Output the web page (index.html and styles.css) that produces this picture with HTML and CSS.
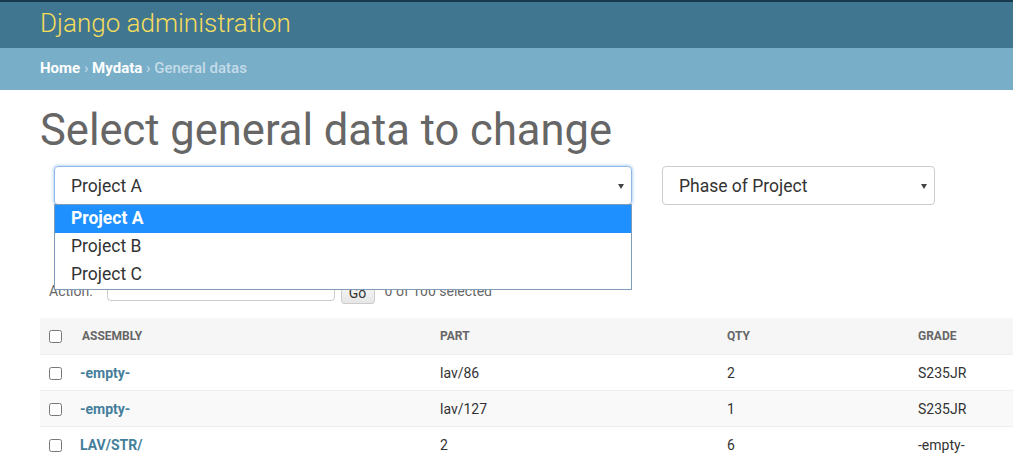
FILE: index.html
```html
<!DOCTYPE html>
<html lang="en">
<head>
  <meta charset="UTF-8" />
  <title>Select general data to change | Django site admin</title>
  <link rel="stylesheet" href="styles.css">
</head>
<body>
  <!-- Header -->
  <div class="header">
    <div class="branding">Django administration</div>
  </div>

  <!-- Breadcrumbs -->
  <div class="breadcrumbs">
    <a href="#">Home</a> &rsaquo; <a href="#">Mydata</a> &rsaquo; <span class="current">General datas</span>
  </div>

  <div class="content">
    <h1>Select general data to change</h1>

    <!-- Filter selects -->
    <div class="filters">
      <div class="fake-select focused project">
        <span>Project A</span>
        <span class="caret"></span>
        <ul class="options">
          <li class="selected">Project A</li>
          <li>Project B</li>
          <li>Project C</li>
        </ul>
      </div>
      <div class="fake-select phase">
        <span>Phase of Project</span>
        <span class="caret"></span>
      </div>
    </div>

    <!-- Actions -->
    <div class="actions">
      <label>Action:</label>
      <div class="action-select"></div>
      <button class="go">Go</button>
      <span class="counter">0 of 100 selected</span>
    </div>

    <!-- Result list -->
    <table class="results">
      <colgroup>
        <col class="c-check"><col class="c-assembly"><col class="c-part"><col class="c-qty"><col class="c-grade">
      </colgroup>
      <thead>
        <tr>
          <th><input type="checkbox"></th>
          <th>Assembly</th>
          <th>Part</th>
          <th>Qty</th>
          <th>Grade</th>
        </tr>
      </thead>
      <tbody>
        <tr>
          <td><input type="checkbox"></td>
          <td><a href="#">-empty-</a></td>
          <td>lav/86</td>
          <td>2</td>
          <td>S235JR</td>
        </tr>
        <tr class="alt">
          <td><input type="checkbox"></td>
          <td><a href="#">-empty-</a></td>
          <td>lav/127</td>
          <td>1</td>
          <td>S235JR</td>
        </tr>
        <tr>
          <td><input type="checkbox"></td>
          <td><a href="#">LAV/STR/</a></td>
          <td>2</td>
          <td>6</td>
          <td>-empty-</td>
        </tr>
      </tbody>
    </table>
  </div>
</body>
</html>
```

FILE: styles.css
```css
/* base */
body {
  margin: 0;
  font-family: Roboto, "Liberation Sans", sans-serif;
  color: #333;
  background: #fff;
  overflow: hidden;
}
a {
  text-decoration: none;
}

/* header + breadcrumbs */
.header {
  height: 46px;
  background: #417690;
  border-top: 2px solid #183a4f;
  padding: 0 40px;
}
.branding {
  color: #f5dd5d;
  font-size: 26px;
  font-weight: 300;
  line-height: 42px;
}
.breadcrumbs {
  height: 42px;
  line-height: 41px;
  background: #79aec8;
  padding: 0 40px;
  font-size: 15px;
  color: #c4dce8;
}
.breadcrumbs a {
  color: #fff;
  font-weight: 700;
}
.breadcrumbs .current {
  color: #c4dce8;
  font-weight: 500;
}

/* content */
.content {
  padding: 16px 0 0 40px;
}
h1 {
  margin: 0;
  font-size: 43.5px;
  font-weight: 400;
  line-height: 50px;
  color: #666;
}

.filters {
  display: flex;
  gap: 30px;
  margin: 10px 0 0 14px;
}
.fake-select {
  position: relative;
  height: 36px;
  border: 1px solid #ccc;
  border-radius: 4px;
  display: flex;
  align-items: center;
  padding: 1px 16px 0;
  font-size: 17.5px;
  color: #333;
  box-sizing: content-box;
}
.fake-select.project {
  width: 544px;
}
.fake-select.phase {
  width: 239px;
}
.fake-select.focused {
  border-color: #8fb8e6;
  box-shadow: 0 0 3px 1px #b8d6f5;
}
.caret {
  margin-left: auto;
  margin-right: -9px;
  width: 0;
  height: 0;
  border-left: 3px solid transparent;
  border-right: 3px solid transparent;
  border-top: 5px solid #444;
}

/* open dropdown list over the page */
.options {
  position: absolute;
  top: 37px;
  left: -1px;
  right: -1px;
  margin: 0;
  padding: 0;
  list-style: none;
  background: #fff;
  border: 1px solid #7f9db9;
  z-index: 5;
}
.options li {
  height: 28px;
  line-height: 27px;
  padding-left: 16px;
  font-size: 17.5px;
  color: #333;
}
.options li.selected {
  background: #1e90ff;
  color: #fff;
  font-weight: 700;
}

/* actions */
.actions {
  display: flex;
  align-items: center;
  margin: 74px 0 0 9px;
  height: 24px;
  font-size: 14px;
  color: #666;
}
.action-select {
  width: 226px;
  height: 18px;
  border: 1px solid #ccc;
  border-radius: 4px;
  margin-left: 14px;
}
.go {
  font-family: inherit;
  font-size: 14px;
  height: 22px;
  width: 34px;
  padding: 0;
  margin-left: 6px;
  margin-top: 4px;
  border: 1px solid #ccc;
  border-radius: 3px;
  background: linear-gradient(#f8f8f8, #e6e6e6);
  color: #333;
}
.counter {
  margin-left: 10px;
}

/* results table */
.results {
  margin-top: 15px;
  border-collapse: collapse;
  table-layout: fixed;
  width: 1100px;
  font-size: 14px;
}
.c-check { width: 32px; }
.c-assembly { width: 358px; }
.c-part { width: 287px; }
.c-qty { width: 191px; }
.c-grade { width: 232px; }

.results th {
  background: #f6f6f6;
  height: 36px;
  padding: 0 10px;
  text-align: left;
  font-size: 12px;
  font-weight: 700;
  text-transform: uppercase;
  color: #666;
  border-bottom: 1px solid #eee;
}
.results td {
  height: 35px;
  padding: 0 10px;
  color: #333;
  border-bottom: 1px solid #eee;
}
.results td:nth-child(2) {
  padding-left: 8px;
}
.results th:first-child,
.results td:first-child {
  padding: 0 0 0 9px;
}
.results tr.alt td {
  background: #f9f9f9;
}
.results td a {
  color: #447e9b;
  font-weight: 700;
}
.results input {
  margin: 0;
  width: 13px;
  height: 13px;
  vertical-align: middle;
}
```
